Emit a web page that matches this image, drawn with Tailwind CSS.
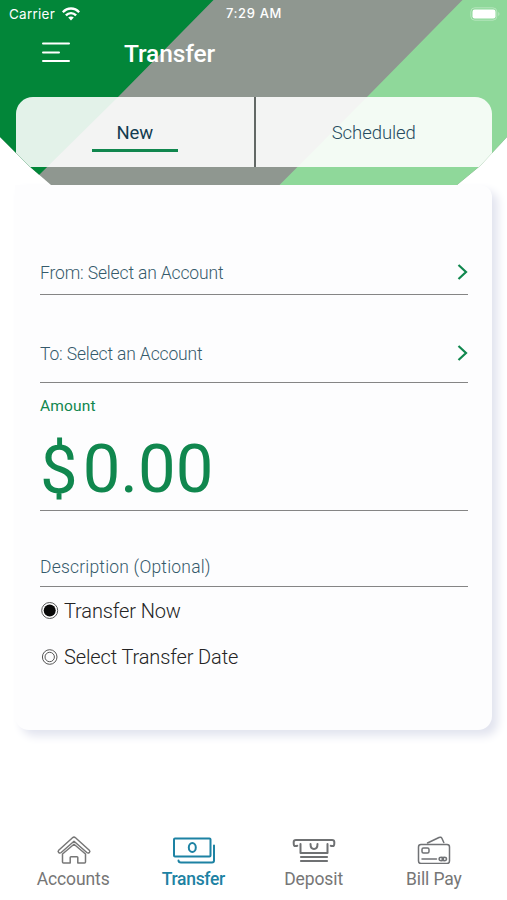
<!DOCTYPE html>
<html lang="en">
<head>
<meta charset="utf-8">
<title>Transfer</title>
<script src="https://cdn.jsdelivr.net/npm/@tailwindcss/browser@4"></script>
</head>
<body class="bg-white font-['Roboto',sans-serif]">
<div class="flex h-[900px] w-[507px] flex-col overflow-hidden bg-white">
  <header class="relative z-10 h-[185px] shrink-0 [clip-path:polygon(0_0,507px_0,507px_137px,480px_166px,457px_185px,51px_185px,29px_166px,0_137px)]">
    <svg class="absolute inset-0" width="507" height="185" viewBox="0 0 507 185">
      <rect width="507" height="185" fill="#8f9790"/>
      <path d="M0 0H213.500L118 97L40 174L29 185H0Z" fill="#028639"/>
      <path d="M462.500 0H507V185H279.500L367 97Z" fill="#8fd89a"/>
    </svg>
    <div class="relative flex h-full flex-col">
      <div class="grid h-7 grid-cols-3 items-center pr-[7px] pl-[9px] font-['Inter',sans-serif] text-[13px] text-white">
        <div class="flex items-center gap-[7px]">
          <span class="text-[13.500px] tracking-[0.25px]">Carrier</span>
          <svg width="18" height="14" viewBox="0 0 18 14" fill="none" stroke="#fff" stroke-width="2.400">
            <path d="M.8 5.300C5.300.2 12.700.2 17.200 5.300"/><path d="M3.900 8.400C6.800 5.300 11.200 5.300 14.100 8.400"/>
            <path d="M6.200 10.600C7.800 9.100 10.200 9.100 11.800 10.600L9 13.600Z" fill="#fff" stroke="none"/>
          </svg>
        </div>
        <span class="pr-px text-center font-medium tracking-[0.650px] whitespace-nowrap">7:29 AM</span>
        <svg class="justify-self-end" width="30" height="14" viewBox="0 0 30 14">
          <rect x=".8" y=".8" width="26" height="12.400" rx="4" fill="none" stroke="#fff" stroke-opacity=".35"/>
          <rect x="2.500" y="2.500" width="23" height="9" rx="2.200" fill="#fff"/>
          <path d="M28.300 5v4c1.500-.7 1.500-3.300 0-4Z" fill="#fff" fill-opacity=".4"/>
        </svg>
      </div>
      <div class="flex h-[49px] items-center gap-[54px] pl-[42px]">
        <svg width="28" height="22" viewBox="0 0 28 22" stroke="#fff" stroke-width="2" stroke-linecap="round">
          <path d="M1 1.500H27M1 10.500H17M1 19H27"/>
        </svg>
        <h1 class="pt-[3px] text-[24.500px] font-medium tracking-[-0.120px] text-white">Transfer</h1>
      </div>
      <div class="mt-5 ml-[15.500px] flex h-[69.500px] w-[476.500px] overflow-hidden rounded-t-[17px]">
        <div class="flex w-[238.500px] flex-col items-center bg-white/89 pt-[23px]">
          <span class="text-[18.500px] leading-[26px] tracking-[-0.200px] text-[#123c50]">New</span>
          <span class="mt-[3px] h-[2.500px] w-[86px] bg-[#10874e]"></span>
        </div>
        <div class="w-[1.500px] bg-[#626865]"></div>
        <div class="flex flex-1 justify-center bg-white/89 pt-[23px]">
          <span class="text-[18.500px] leading-[26px] font-light tracking-[-0.050px] text-[#264b5f]">Scheduled</span>
        </div>
      </div>
    </div>
  </header>

  <main class="ml-[15px] h-[544.500px] w-[477px] shrink-0 rounded-tr-[12px] rounded-b-[14px] bg-[#fdfdfe] pr-6 pl-[25px] shadow-[6px_6px_10px_#e2e4ef]">
    <div class="flex h-[110px] items-end justify-between border-b-[1.500px] border-[#858585] pb-[9px]">
      <span class="text-[17.500px] leading-6 font-light tracking-[-0.150px] text-[#355a6b]">From: Select an Account</span>
      <svg class="mb-[5px]" width="11" height="16" viewBox="0 0 11 16" fill="none" stroke="#10874e" stroke-width="2.200"><path d="M1.500 1L9 8L1.500 15"/></svg>
    </div>
    <div class="flex h-[88px] items-end justify-between border-b-[1.500px] border-[#858585] pb-4">
      <span class="text-[17.500px] leading-6 font-light tracking-[-0.150px] text-[#355a6b]">To: Select an Account</span>
      <svg class="mb-[5px]" width="11" height="16" viewBox="0 0 11 16" fill="none" stroke="#10874e" stroke-width="2.200"><path d="M1.500 1L9 8L1.500 15"/></svg>
    </div>
    <div class="flex h-[128px] flex-col border-b-[1.500px] border-[#858585] pt-[13px] text-[#10874e]">
      <span class="text-[15.500px] leading-5 tracking-[0.180px]">Amount</span>
      <div class="mt-[13px] flex gap-[5px] text-[67px] leading-[80px]"><span class="pt-px">$</span><span>0.00</span></div>
    </div>
    <div class="flex h-[76px] items-end border-b-[1.500px] border-[#858585] pb-[7px]">
      <span class="text-[17.500px] leading-6 font-light tracking-[0.200px] text-[#355a6b]">Description (Optional)</span>
    </div>
    <div class="flex flex-col gap-[18px] pt-[10px] text-[20px] leading-7 font-light tracking-[-0.120px] text-[#242424]">
      <div class="flex items-center gap-[5px]">
        <svg width="19" height="19" viewBox="0 0 19 19"><circle cx="9.700" cy="8.500" r="8" fill="#fff" stroke="#555" stroke-width="1"/><circle cx="9.700" cy="8.500" r="6" fill="#080808"/></svg>
        <span>Transfer Now</span>
      </div>
      <div class="flex items-center gap-[5px]">
        <svg width="19" height="19" viewBox="0 0 19 19" fill="none" stroke="#555"><circle cx="9.700" cy="9" r="7.300"/><circle cx="9.700" cy="9" r="4.700"/></svg>
        <span>Select Transfer Date</span>
      </div>
    </div>
  </main>

  <nav class="mt-auto grid h-[68px] shrink-0 grid-cols-4 px-[13px] text-[17.500px] leading-6 tracking-[-0.100px] text-[#767676]">
    <div class="flex flex-col items-center gap-[3px]">
      <svg class="relative left-[0.500px]" width="36" height="32" viewBox="0 0 36 32" fill="none" stroke="#777" stroke-width="1.500" stroke-linejoin="round" stroke-linecap="round">
        <path d="M16.500 5.800Q18 4.500 19.500 5.800L33.300 18.200Q34.500 19.500 33.200 20.700Q32 21.500 30.800 20.500L18 9.200L5.200 20.500Q4 21.500 2.800 20.700Q1.500 19.500 2.700 18.200Z"/>
        <path d="M6.500 22V30Q6.500 31 7.500 31H14.200V25.500Q14.200 24.700 15 24.700H21Q21.800 24.700 21.800 25.500V31H28.500Q29.500 31 29.500 30V22L18 12.200Z"/>
      </svg>
      <span>Accounts</span>
    </div>
    <div class="flex flex-col items-center gap-[3px] text-[#1d82a3]">
      <svg class="relative left-px" width="44" height="32" viewBox="0 0 44 32" fill="none" stroke="#1d82a3" stroke-width="2" stroke-linejoin="round" stroke-linecap="round">
        <rect x="2" y="6.500" width="36.500" height="18" rx="1"/><ellipse cx="20.300" cy="15.500" rx="3.500" ry="4.500"/>
        <path d="M42 13.500V28.500Q42 30.500 40 30.500H9Q6.500 30.500 6.500 28.500"/>
      </svg>
      <span class="font-medium tracking-[-0.320px]">Transfer</span>
    </div>
    <div class="flex flex-col items-center gap-[3px]">
      <svg width="44" height="32" viewBox="0 0 44 32" fill="none" stroke="#6f7173" stroke-width="2" stroke-linecap="round" stroke-linejoin="round">
        <path d="M5.300 13.800C1.700 14.800 1.700 13 1.700 11V10Q1.700 8 4 8H40Q42.300 8 42.300 10V11C42.300 13 42.300 14.800 38.700 13.800"/>
        <path d="M8.500 12V21H35.500V12"/><path d="M18.500 12C18.500 18.500 25.500 18.500 25.500 12"/>
        <path d="M9 25H35M9 29H35" stroke-width="2.200"/>
      </svg>
      <span>Deposit</span>
    </div>
    <div class="flex flex-col items-center gap-[3px]">
      <svg class="relative left-[0.500px]" width="36" height="32" viewBox="0 0 36 32" fill="none" stroke="#707275" stroke-width="1.500" stroke-linecap="round" stroke-linejoin="round">
        <rect x="2.500" y="12.500" width="31" height="19" rx="2.500"/><path d="M11.500 11L23 5.500Q25 4.500 26 6.500L27.800 10.500"/>
        <rect x="6" y="16" width="7" height="5" rx="1.500"/><path d="M6 27H20.500"/>
        <ellipse cx="25.300" cy="27" rx="2.200" ry="1.700"/><ellipse cx="28.300" cy="27" rx="2.200" ry="1.700"/>
      </svg>
      <span>Bill Pay</span>
    </div>
  </nav>
</div>
</body>
</html>
